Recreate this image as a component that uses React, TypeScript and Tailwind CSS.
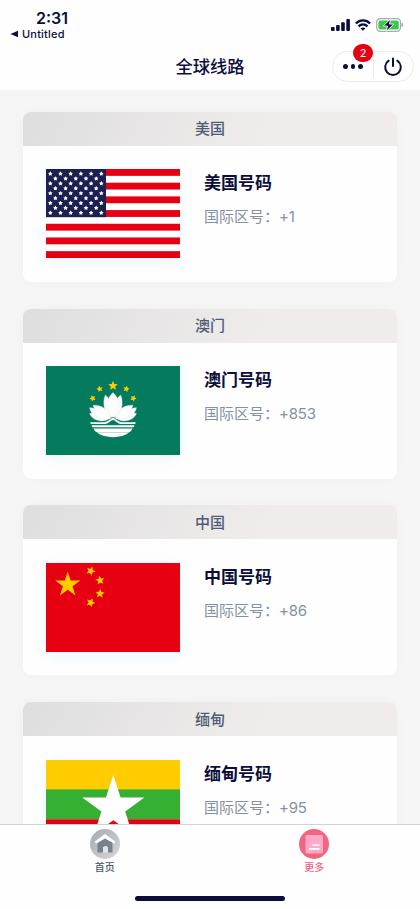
const lines = [
  { name: "美国", title: "美国号码", code: "+1", Flag: UsaFlag },
  { name: "澳门", title: "澳门号码", code: "+853", Flag: MacauFlag },
  { name: "中国", title: "中国号码", code: "+86", Flag: ChinaFlag },
  { name: "缅甸", title: "缅甸号码", code: "+95", Flag: MyanmarFlag },
];

function Star({ cx, cy, r, turn = 0, inner = 0.382, fill }: { cx: number; cy: number; r: number; turn?: number; inner?: number; fill: string }) {
  const points = Array.from({ length: 10 }, (_, i) => {
    const angle = ((i * 36 - 90 + turn) * Math.PI) / 180;
    const radius = i % 2 ? r * inner : r;
    return `${(cx + radius * Math.cos(angle)).toFixed(2)},${(cy + radius * Math.sin(angle)).toFixed(2)}`;
  });
  return <polygon points={points.join(" ")} fill={fill} />;
}

function UsaFlag() {
  return (
    <svg viewBox="0 0 134 89" className="block w-full h-full">
      <rect width="134" height="89" fill="#fff" />
      {[0, 2, 4, 6, 8, 10, 12].map((i) => (
        <rect key={i} y={(i * 89) / 13} width="134" height={89 / 13} fill="#e60012" />
      ))}
      <rect width="60" height="48.2" fill="#1c2050" />
      {Array.from({ length: 9 }, (_, row) =>
        Array.from({ length: row % 2 ? 5 : 6 }, (_, col) => (
          <Star key={`${row}-${col}`} cx={4.3 + col * 10.2 + (row % 2 ? 5.1 : 0)} cy={4.7 + row * 4.9} r={2.4} inner={0.55} fill="#fff" />
        ))
      )}
    </svg>
  );
}

function MacauFlag() {
  return (
    <svg viewBox="0 0 134 89" className="block w-full h-full">
      <rect width="134" height="89" fill="#057b5e" />
      <Star cx={67} cy={19.7} r={5} inner={0.45} fill="#ffcc00" />
      <Star cx={53.7} cy={23} r={3.3} inner={0.5} turn={-15} fill="#ffcc00" />
      <Star cx={80.3} cy={23} r={3.3} inner={0.5} turn={15} fill="#ffcc00" />
      <Star cx={46.7} cy={32.3} r={3.3} inner={0.5} turn={-25} fill="#ffcc00" />
      <Star cx={87.3} cy={32.3} r={3.3} inner={0.5} turn={25} fill="#ffcc00" />
      <g fill="#fff" stroke="#c4ded7" strokeWidth="0.35">
        <path d="M62 54C53 56.500 46 53.500 43.500 47.500C49 46 56 46 62 54Z" />
        <path d="M72 54C81 56.500 88 53.500 90.500 47.500C85 46 78 46 72 54Z" />
        <path d="M65 53C55 55 45 49.500 43.500 41.700C46 41.700 47.500 42.300 48.500 42.500C47.500 41 47 40 47 39.300C55 38.500 63 43 65 53Z" />
        <path d="M69 53C79 55 89 49.500 90.500 41.700C88 41.700 86.500 42.300 85.500 42.500C86.500 41 87 40 87 39.300C79 38.500 71 43 69 53Z" />
        <path d="M66 52C58 48 56 37 59.300 29C65 33 68 42 66 52Z" />
        <path d="M68 52C76 48 78 37 74.700 29C69 33 66 42 68 52Z" />
        <path d="M67 26.500C58.500 34 59.500 46 67 52C74.500 46 75.500 34 67 26.500Z" />
      </g>
      <g fill="#fff">
        <path d="M44.300 56.200H58C62 56.200 63.500 52 67 51.500C70.500 52 72 56.200 76 56.200H89.700L89.300 58H75C71.500 58 70 54.500 67 54C64 54.500 62.500 58 59 58H44.700Z" />
        <path d="M45.500 59.300H88.500L87.700 61.200H46.300Z" />
        <path d="M47.500 62.500H86.500C85.800 64.100 84.800 65.100 84 66H50C49 65 48.200 64.100 47.500 62.500Z" />
        <path d="M50.500 66.300H83.500C75 72.800 59 72.800 50.500 66.300Z" />
      </g>
      <path d="M59.500 55C64 54 65.500 51.800 67 51.300C68.500 51.800 70 54 74.500 55" fill="none" stroke="#057b5e" strokeWidth="0.8" />
    </svg>
  );
}

function ChinaFlag() {
  return (
    <svg viewBox="0 0 134 89" className="block w-full h-full">
      <rect width="134" height="89" fill="#e60012" />
      <Star cx={21.7} cy={21.7} r={13.2} fill="#ffcc00" />
      <Star cx={44.7} cy={8} r={4.8} inner={0.45} turn={23} fill="#ffcc00" />
      <Star cx={54} cy={17.3} r={4.8} inner={0.45} turn={-8} fill="#ffcc00" />
      <Star cx={54} cy={30.7} r={4.8} inner={0.45} turn={4} fill="#ffcc00" />
      <Star cx={44.7} cy={39.7} r={4.8} inner={0.45} turn={22} fill="#ffcc00" />
    </svg>
  );
}

function MyanmarFlag() {
  return (
    <svg viewBox="0 0 134 89" className="block w-full h-full">
      <rect width="134" height="30" fill="#ffcc00" />
      <rect y="29.4" width="134" height="30" fill="#36b032" />
      <rect y="59.3" width="134" height="29.7" fill="#e60012" />
      <Star cx={67.3} cy={47.7} r={32.7} fill="#fff" />
    </svg>
  );
}

function StatusBar() {
  return (
    <div className="flex justify-between pl-[10px] pr-[16px] h-[44px]">
      <div className="pt-[9px]">
        <div className="pl-[26px] text-[16px] leading-[18px] font-semibold">2:31</div>
        <div className="flex items-center gap-[4px] text-[11px] leading-[14px] font-medium tracking-[0.2px]">
          <svg viewBox="0 0 8 8" className="w-[8px] h-[8px]">
            <path d="M8 0.8V7.2L0.5 4Z" fill="currentColor" />
          </svg>
          Untitled
        </div>
      </div>
      <div className="flex items-center gap-[5px] h-[50px]">
        <svg viewBox="0 0 19 12" className="w-[19px] h-[12px]" fill="currentColor">
          <rect x="0" y="8" width="3.6" height="4" rx="0.9" />
          <rect x="5.1" y="6" width="3.6" height="6" rx="0.9" />
          <rect x="10.2" y="3.3" width="3.6" height="8.7" rx="0.9" />
          <rect x="15.3" y="0" width="3.6" height="12" rx="0.9" />
        </svg>
        <svg viewBox="0 0 16 12" className="w-[16px] h-[12px]" fill="none" stroke="currentColor" strokeWidth="2.3">
          <path d="M0.9 4.5C5 0.3 11 0.3 15.1 4.5" />
          <path d="M3.5 7.3C6.2 4.8 9.800 4.8 12.5 7.3" />
          <path d="M8 11.8L5.5 9.3C7 8.1 9 8.1 10.5 9.3Z" fill="currentColor" stroke="none" />
        </svg>
        <svg viewBox="0 0 28 14" className="w-[28px] h-[14px]">
          <rect x="0.7" y="0.7" width="23.8" height="12.6" rx="3.6" fill="#fff" stroke="#a5a8b4" strokeWidth="1.2" />
          <rect x="2.4" y="2.4" width="20.4" height="9.2" rx="2" fill="#3fc64b" />
          <path d="M25.700 4.8C27.4 5.2 27.4 8.8 25.700 9.2Z" fill="#8d909f" />
          <path d="M14.600 0.9L7.2 8H11.500L10.2 13.3L17.900 6.100H13.500Z" fill="currentColor" stroke="#fff" strokeWidth="0.9" />
        </svg>
      </div>
    </div>
  );
}

function TitleBar() {
  return (
    <div className="relative flex items-center justify-center h-[46px]">
      <h1 className="text-[17.3px] leading-[24px] font-medium">全球线路</h1>
      <div className="absolute right-[6px] top-[7px] flex items-center w-[82px] h-[31px] rounded-full border border-[#ebebeb] bg-white">
        <div className="flex flex-1 justify-center gap-[3px]">
          <span className="w-[4.5px] h-[4.5px] rounded-full bg-[#0b0e3b]"></span>
          <span className="w-[4.5px] h-[4.5px] rounded-full bg-[#0b0e3b]"></span>
          <span className="w-[4.5px] h-[4.5px] rounded-full bg-[#0b0e3b]"></span>
        </div>
        <div className="w-px h-[23px] bg-[#ebebeb]"></div>
        <div className="flex flex-1 justify-center">
          <svg viewBox="0 0 20 20" className="w-[20px] h-[20px]" fill="none" stroke="currentColor" strokeWidth="2" strokeLinecap="round">
            <path d="M10 1.5V9" />
            <path d="M5.7 3.7A7.800 7.800 0 1 0 14.3 3.7" />
          </svg>
        </div>
        <span className="absolute left-[20px] -top-[8px] flex items-center justify-center w-[20px] h-[18px] rounded-full bg-[#e60012] text-white text-[11px]">
          2
        </span>
      </div>
    </div>
  );
}

function LineCard({ name, title, code, Flag }: (typeof lines)[number]) {
  return (
    <section className="h-[170px] shrink-0 rounded-lg overflow-hidden bg-[#fefefe] shadow-[0_0_12px_rgba(0,0,0,0.02)]">
      <h2 className="h-[34px] flex items-center justify-center bg-[linear-gradient(120deg,#dedede,#f0ecec_65%)] text-[15px] leading-none font-medium text-[#505b76]">
        {name}
      </h2>
      <div className="flex gap-6 pl-[23px] pt-[23.5px]">
        <div className="w-[134px] h-[89px] shadow-[0_3px_14px_rgba(90,180,225,0.12)]">
          <Flag />
        </div>
        <div className="pt-[2px]">
          <h3 className="text-[17px] leading-[24px] font-bold">{title}</h3>
          <p className="mt-[11px] text-[15px] leading-[22px] text-[#8491a2]">
            国际区号：<span className="tracking-[-0.2px]">{code}</span>
          </p>
        </div>
      </div>
    </section>
  );
}

function TabBar() {
  return (
    <nav className="shrink-0 h-[85px] bg-[#fefefe] border-t border-[#d0d3d6] flex flex-col justify-between pb-[8px]">
      <div className="flex pt-[4px] pr-px">
        <div className="flex-1 flex flex-col items-center text-[#4e5869]">
          <svg viewBox="0 0 30 30" className="w-[30px] h-[30px]">
            <defs>
              <linearGradient id="homeFill" x1="0" y1="0" x2="1" y2="1">
                <stop offset="0" stopColor="#a4a9b0" />
                <stop offset="1" stopColor="#d8d9da" />
              </linearGradient>
            </defs>
            <circle cx="15" cy="15" r="15" fill="url(#homeFill)" />
            <path d="M7.5 13L15 8L22.5 13V23.5H18V18H13V23.5H7.500Z" fill="#78818d" />
            <path d="M13 23.5V18.3Q15.500 15.500 18 18.300V23.5Z" fill="#e3e4e6" />
            <path d="M4.500 12.8L15 5L25.500 12.8L23.800 14.600L15 9.500L6.500 14.600Z" fill="#fff" />
          </svg>
          <span className="mt-px text-[10px] leading-[14px] font-medium">首页</span>
        </div>
        <div className="flex-1 flex flex-col items-center text-[#f26482]">
          <svg viewBox="0 0 30 30" className="w-[30px] h-[30px]">
            <circle cx="15" cy="15" r="15" fill="#f0667f" />
            <rect x="6.5" y="6" width="17.5" height="18.5" rx="1.5" fill="#ffa8c7" />
            <path d="M13.5 16.2H20.5M10 19.8H20.5" stroke="#fff" strokeWidth="1.8" />
          </svg>
          <span className="mt-px text-[10px] leading-[14px] font-medium">更多</span>
        </div>
      </div>
      <div className="self-center w-[150px] h-[5px] rounded-full bg-[#0d0c3c]"></div>
    </nav>
  );
}

export default function App() {
  return (
    <div className="w-[420px] h-[909px] flex flex-col overflow-hidden bg-[#f5f5f5] text-[#0b0e3b] font-[Inter,'Noto_Sans_CJK_SC',sans-serif]">
      <header className="shrink-0 h-[90px] bg-[#fefefe]">
        <StatusBar />
        <TitleBar />
      </header>
      <main className="flex-1 min-h-0 overflow-hidden flex flex-col gap-[26.8px] px-[23px] pt-[21.8px]">
        {lines.map((line) => (
          <LineCard key={line.code} {...line} />
        ))}
      </main>
      <TabBar />
    </div>
  );
}
